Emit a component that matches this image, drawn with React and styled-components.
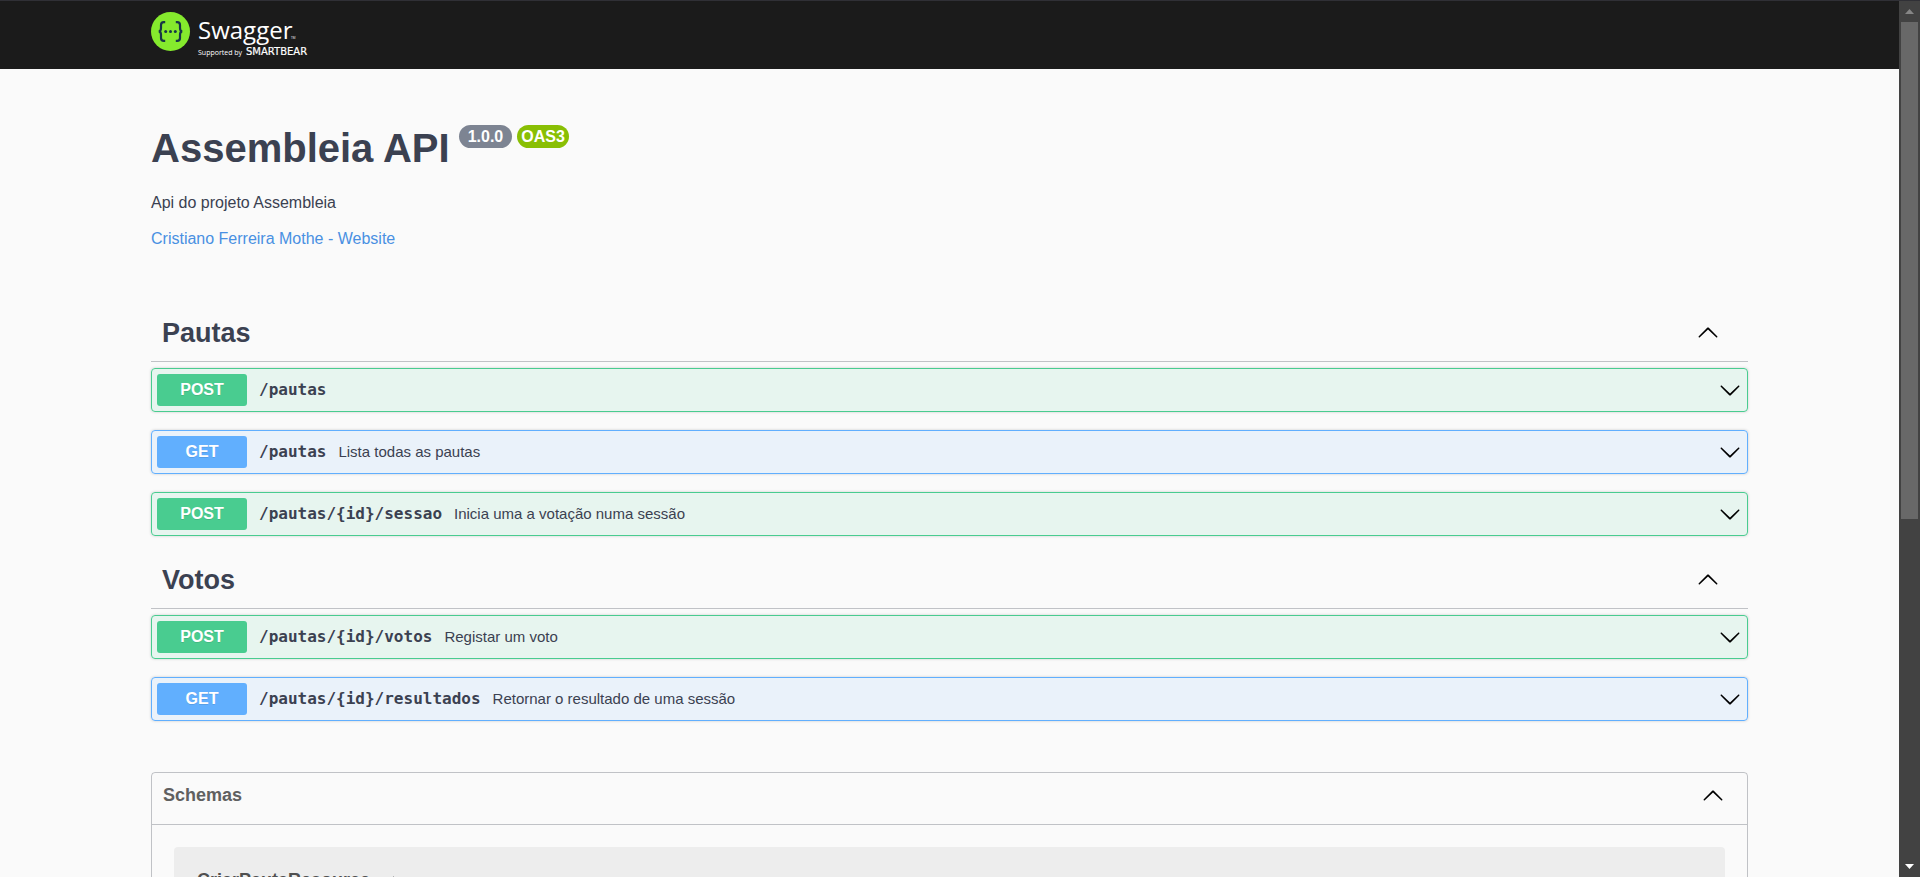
import React from "react";
import styled, { createGlobalStyle } from "styled-components";

const GlobalStyle = createGlobalStyle`
  * {
    box-sizing: border-box;
  }

  body {
    margin: 0;
    background: #fafafa;
    color: #3b4151;
    font-family: "Liberation Sans", Arial, sans-serif;
    font-size: 16px;
    line-height: 20px;
  }

  h1, h2, h3, p {
    margin: 0;
  }

  button {
    border: 0;
    padding: 0;
    background: none;
    color: inherit;
    font: inherit;
    text-align: left;
    cursor: pointer;
  }
`;

const Window = styled.div`
  display: grid;
  grid-template-columns: 1fr 21px;
  height: 100vh;
  overflow: hidden;
`;

const Page = styled.div`
  min-width: 0;
  overflow: hidden;
`;

const Wrapper = styled.div`
  width: 84.1%;
  max-width: 1597px;
  margin: 0 auto;
`;

const Topbar = styled.header`
  background: #1b1b1b;
  border-top: 1px solid #303036;
  padding: 8px 0;

  a {
    display: block;
    height: 52px;
  }

  svg {
    display: block;
  }
`;

const Info = styled.section`
  padding: 56px 0;

  p {
    margin: 22px 0 16px;
  }

  a {
    display: block;
    width: fit-content;
    color: #4990e2;
    text-decoration: none;
  }
`;

const TitleRow = styled.div`
  display: flex;
  align-items: flex-start;
  gap: 5px;

  h1 {
    margin-right: 4px;
    font-size: 40px;
    line-height: 46px;
  }
`;

const Badge = styled.span`
  padding: 0 ${(props) => (props.$narrow ? "4px" : "9px")};
  border-radius: 12px;
  background: ${(props) => (props.$narrow ? "#89bf04" : "#7d8492")};
  color: #fff;
  font-weight: bold;
  line-height: 23px;
`;

const TagSection = styled.section`
  margin-bottom: 16px;
`;

const TagHeader = styled.button`
  display: flex;
  align-items: center;
  justify-content: space-between;
  width: 100%;
  padding: 12px 29px 12px 11px;
  margin-bottom: 6px;
  border-bottom: 1px solid rgba(59, 65, 81, 0.3);

  h2 {
    font-size: 27px;
    line-height: 32px;
  }
`;

const Operations = styled.div`
  display: flex;
  flex-direction: column;
  gap: 18px;
`;

const colors = {
  POST: { main: "#49cc90", back: "rgba(73, 204, 144, 0.1)" },
  GET: { main: "#61affe", back: "rgba(97, 175, 254, 0.1)" },
};

const OperationRow = styled.button`
  display: flex;
  align-items: center;
  gap: 12px;
  width: 100%;
  padding: 5px 6px 5px 5px;
  border: 1px solid ${(props) => colors[props.$method].main};
  border-radius: 4px;
  background: ${(props) => colors[props.$method].back};
  box-shadow: 0 0 3px rgba(0, 0, 0, 0.19);

  svg {
    margin-left: auto;
  }
`;

const Method = styled.span`
  width: 90px;
  border-radius: 3px;
  background: ${(props) => colors[props.$method].main};
  color: #fff;
  font-weight: bold;
  line-height: 32px;
  text-align: center;
  text-shadow: 0 1px 0 rgba(0, 0, 0, 0.1);
`;

const Path = styled.span`
  font-family: "DejaVu Sans Mono", monospace;
  font-weight: bold;
`;

const Summary = styled.span`
  font-size: 15px;
`;

const Schemas = styled.section`
  margin: 51px 0 34px;
  border: 1px solid rgba(59, 65, 81, 0.3);
  border-radius: 4px;
`;

const SchemasHeader = styled.button`
  display: flex;
  align-items: center;
  justify-content: space-between;
  width: 100%;
  height: 52px;
  padding: 12px 23px 18px 11px;
  border-bottom: 1px solid rgba(59, 65, 81, 0.3);

  h3 {
    color: #606060;
    font-size: 18px;
    line-height: 21px;
  }
`;

const Model = styled.div`
  margin: 22px;
  padding: 23px;
  border-radius: 4px;
  background: rgba(0, 0, 0, 0.05);
`;

const ModelToggle = styled.button`
  display: flex;
  align-items: center;
  gap: 16px;
  color: #505050;
  font-size: 18px;
  font-weight: bold;
  line-height: 21px;
`;

const Scrollbar = styled.div`
  display: flex;
  flex-direction: column;
  align-items: center;
  background: #424242;
  border-top: 1px solid #303036;
`;

const ScrollArrow = styled.span`
  display: grid;
  place-items: center;
  height: 21px;
`;

const ScrollTrack = styled.div`
  flex: 1;
  width: 17px;
`;

const ScrollThumb = styled.div`
  height: 59.6%;
  background: #686868;
`;

const ArrowIcon = styled.svg`
  flex: none;
  width: 22px;
  height: 22px;
  transform: ${(props) => (props.$down ? "rotate(180deg)" : "none")};
`;

function Arrow({ down }) {
  return (
    <ArrowIcon $down={down} viewBox="0 1 20 20" aria-hidden="true">
      <path
        fill="#000"
        d="M17.418 14.908c.272.268.709.268.979 0s.271-.701 0-.969L10.489 6.109c-.27-.268-.707-.268-.979 0L1.602 13.939c-.271.268-.271.701 0 .969s.707.268.979 0L10 7.767l7.418 7.141z"
      />
    </ArrowIcon>
  );
}

function Logo() {
  return (
    <svg width="164" height="52" viewBox="0 0 164 52">
      <circle cx="19.5" cy="22.5" r="19.5" fill="#85ea2d" />
      <g fill="none" stroke="#173647" strokeWidth="2.2">
        <path d="M14.2 13.2h-1.4c-2 0-2.8 1-2.8 2.8v3c0 2.2-.5 3.2-2.2 3.4 1.7.2 2.2 1.2 2.2 3.4v3.2c0 1.8.8 2.8 2.8 2.8h1.4" />
        <path d="M24.8 13.2h1.4c2 0 2.8 1 2.8 2.8v3c0 2.2.5 3.2 2.2 3.4-1.7.2-2.2 1.2-2.2 3.4v3.2c0 1.8-.8 2.8-2.8 2.8h-1.4" />
      </g>
      <g fill="#173647">
        <circle cx="14.7" cy="22.4" r="1.5" />
        <circle cx="19.5" cy="22.4" r="1.5" />
        <circle cx="24.3" cy="22.4" r="1.5" />
      </g>
      <g fill="#fff" fontFamily="Open Sans, sans-serif">
        <text x="47" y="30" fontSize="24">
          Swagger
        </text>
        <text x="140" y="30" fontSize="3">
          TM
        </text>
        <text x="47" y="46" fontSize="7">
          Supported by
        </text>
        <text
          x="95"
          y="46"
          fontSize="10"
          stroke="#fff"
          strokeWidth="0.2"
          fontFamily="DejaVu Sans, sans-serif"
        >
          SMARTBEAR
        </text>
      </g>
    </svg>
  );
}

const tags = [
  {
    name: "Pautas",
    operations: [
      { method: "POST", path: "/pautas" },
      { method: "GET", path: "/pautas", summary: "Lista todas as pautas" },
      {
        method: "POST",
        path: "/pautas/{id}/sessao",
        summary: "Inicia uma a votação numa sessão",
      },
    ],
  },
  {
    name: "Votos",
    operations: [
      {
        method: "POST",
        path: "/pautas/{id}/votos",
        summary: "Registar um voto",
      },
      {
        method: "GET",
        path: "/pautas/{id}/resultados",
        summary: "Retornar o resultado de uma sessão",
      },
    ],
  },
];

export default function App() {
  return (
    <Window>
      <GlobalStyle />
      <Page>
        <Topbar>
          <Wrapper>
            <a href="#top">
              <Logo />
            </a>
          </Wrapper>
        </Topbar>
        <Wrapper as="main">
          <Info>
            <TitleRow>
              <h1>Assembleia API</h1>
              <Badge>1.0.0</Badge>
              <Badge $narrow>OAS3</Badge>
            </TitleRow>
            <p>Api do projeto Assembleia</p>
            <a href="#website">Cristiano Ferreira Mothe - Website</a>
          </Info>
          {tags.map((tag) => (
            <TagSection key={tag.name}>
              <TagHeader>
                <h2>{tag.name}</h2>
                <Arrow />
              </TagHeader>
              <Operations>
                {tag.operations.map((op) => (
                  <OperationRow key={op.method + op.path} $method={op.method}>
                    <Method $method={op.method}>{op.method}</Method>
                    <Path>{op.path}</Path>
                    {op.summary && <Summary>{op.summary}</Summary>}
                    <Arrow down />
                  </OperationRow>
                ))}
              </Operations>
            </TagSection>
          ))}
          <Schemas>
            <SchemasHeader>
              <h3>Schemas</h3>
              <Arrow />
            </SchemasHeader>
            <Model>
              <ModelToggle>
                CriarPautaResource
                <svg width="18" height="18" viewBox="0 0 24 24">
                  <path d="M10 6L8.59 7.41 13.17 12l-4.58 4.59L10 18l6-6z" />
                </svg>
              </ModelToggle>
            </Model>
          </Schemas>
        </Wrapper>
      </Page>
      <Scrollbar aria-hidden="true">
        <ScrollArrow>
          <svg width="9" height="5" viewBox="0 0 9 5">
            <path fill="#868686" d="M0 5L4.5 0 9 5z" />
          </svg>
        </ScrollArrow>
        <ScrollTrack>
          <ScrollThumb />
        </ScrollTrack>
        <ScrollArrow>
          <svg width="9" height="5" viewBox="0 0 9 5">
            <path fill="#fff" d="M0 0L4.5 5 9 0z" />
          </svg>
        </ScrollArrow>
      </Scrollbar>
    </Window>
  );
}
